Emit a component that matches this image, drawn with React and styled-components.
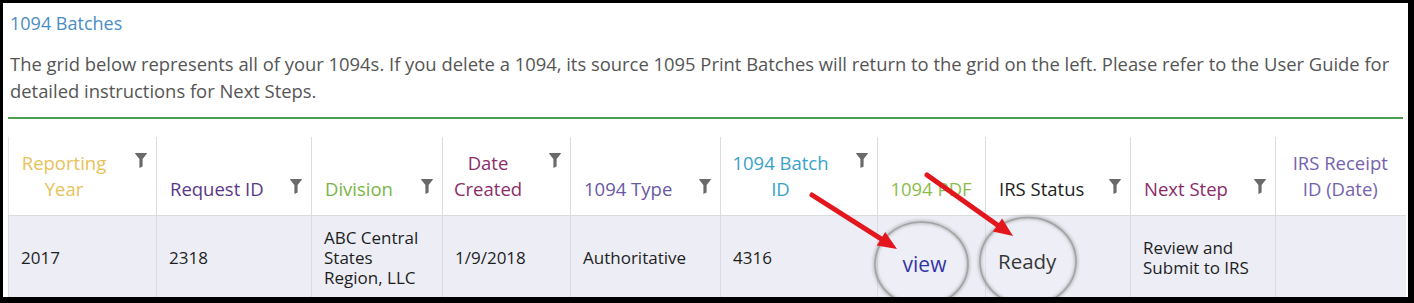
import React from 'react';
import styled, { createGlobalStyle } from 'styled-components';

const GlobalStyle = createGlobalStyle`
  html, body {
    margin: 0;
    padding: 0;
    background: #fff;
  }
  body {
    font-family: "Open Sans", "Liberation Sans", Arial, sans-serif;
  }
`;

// header labels: "\n" marks where the grid wraps the caption
const columns = [
  { key: 'year', label: 'Reporting\nYear', color: '#e8c15a', width: 148, center: true, filter: true },
  { key: 'request', label: 'Request ID', color: '#583988', width: 155, filter: true },
  { key: 'division', label: 'Division', color: '#7bb445', width: 131, filter: true },
  { key: 'date', label: 'Date\nCreated', color: '#8c2d69', width: 128, center: true, filter: true },
  { key: 'type', label: '1094 Type', color: '#6a58a3', width: 150, filter: true },
  { key: 'batch', label: '1094 Batch\nID', color: '#38a2cb', width: 157, center: true, filter: true },
  { key: 'pdf', label: '1094 PDF', color: '#8bbd4b', width: 108, center: true },
  { key: 'status', label: 'IRS Status', color: '#1e1e1e', width: 145, filter: true },
  { key: 'next', label: 'Next Step', color: '#8a2b69', width: 145, filter: true },
  { key: 'receipt', label: 'IRS Receipt\nID (Date)', color: '#7562ae', width: 130, center: true },
];

const row = {
  year: '2017',
  request: '2318',
  division: 'ABC Central States Region, LLC',
  date: '1/9/2018',
  type: 'Authoritative',
  batch: '4316',
  next: 'Review and Submit to IRS',
  receipt: '',
};

const FilterIcon = ({ pull }) => (
  <FilterSvg viewBox="0 0 12 15" width="12" height="15" $pull={pull}>
    <path d="M0 0.5 Q0 0 0.6 0 H11.4 Q12 0 12 0.5 L7.6 6 V13.6 L4.4 15 V6 Z" fill="#6a6a6a" />
  </FilterSvg>
);

const Arrow = ({ x1, y1, x2, y2 }) => {
  const angle = Math.atan2(y2 - y1, x2 - x1);
  const len = 19;
  const half = 8;
  const bx = x2 - len * Math.cos(angle);
  const by = y2 - len * Math.sin(angle);
  const px = -Math.sin(angle) * half;
  const py = Math.cos(angle) * half;
  return (
    <g>
      <line x1={x1} y1={y1} x2={bx + 2 * Math.cos(angle)} y2={by + 2 * Math.sin(angle)} stroke="#e2161c" strokeWidth="5" strokeLinecap="round" />
      <polygon points={`${x2},${y2} ${bx + px},${by + py} ${bx - px},${by - py}`} fill="#e2161c" />
    </g>
  );
};

const App = () => {
  return (
    <>
      <GlobalStyle />
      <Frame>
        <Title>1094 Batches</Title>
        <Intro>
          The grid below represents all of your 1094s. If you delete a 1094, its source 1095 Print Batches will return to the grid on the left. Please refer to the User Guide for detailed instructions for Next Steps.
        </Intro>
        <Rule />
        <Grid>
          <colgroup>
            {columns.map((c) => (
              <col key={c.key} style={{ width: c.width }} />
            ))}
          </colgroup>
          <thead>
            <tr>
              {columns.map((c) => (
                <HeadCell key={c.key} $color={c.color} $center={c.center} $filter={c.filter}>
                  {c.filter && <FilterIcon pull={c.center} />}
                  {c.label}
                </HeadCell>
              ))}
            </tr>
          </thead>
          <tbody>
            <tr>
              <Cell>{row.year}</Cell>
              <Cell>{row.request}</Cell>
              <Cell>{row.division}</Cell>
              <Cell>{row.date}</Cell>
              <Cell>{row.type}</Cell>
              <Cell>{row.batch}</Cell>
              <Cell $center>
                <ViewLink href="#">view</ViewLink>
              </Cell>
              <Cell>
                <Status>Ready</Status>
              </Cell>
              <Cell>{row.next}</Cell>
              <Cell>{row.receipt}</Cell>
            </tr>
          </tbody>
        </Grid>

        <Overlay viewBox="0 0 1414 303" width="1414" height="303">
          <defs>
            <filter id="ringShadow" x="-20%" y="-20%" width="140%" height="140%">
              <feGaussianBlur stdDeviation="1.6" />
            </filter>
          </defs>
          <ellipse cx="921.5" cy="264" rx="46.5" ry="42" fill="rgba(255,255,255,0.18)" stroke="#9a9a9a" strokeWidth="4" opacity="0.55" filter="url(#ringShadow)" />
          <ellipse cx="921.5" cy="264" rx="46.5" ry="42" fill="none" stroke="#a3a3a3" strokeWidth="1.6" />
          <ellipse cx="1028" cy="261.5" rx="48" ry="44" fill="rgba(255,255,255,0.18)" stroke="#9a9a9a" strokeWidth="4" opacity="0.55" filter="url(#ringShadow)" />
          <ellipse cx="1028" cy="261.5" rx="48" ry="44" fill="none" stroke="#a3a3a3" strokeWidth="1.6" />
          <Arrow x1={812} y1={195} x2={897} y2={249} />
          <Arrow x1={927} y1={175} x2={1013} y2={236} />
        </Overlay>
      </Frame>
    </>
  );
};

export default App;

const Frame = styled.div`
  position: relative;
  box-sizing: border-box;
  width: 1414px;
  height: 303px;
  overflow: hidden;
  background: #fff;
  border-style: solid;
  border-color: #000;
  border-width: 3px 6px 6px 3px;
  padding: 0 3px 0 5px;
`;

const Title = styled.div`
  padding: 8px 0 0 2px;
  height: 25px;
  font-size: 18px;
  line-height: 25px;
  color: #4a8cc4;
`;

const Intro = styled.p`
  margin: 14px 0 0 0;
  padding-left: 2px;
  font-size: 18.4px;
  line-height: 27px;
  color: #555;
`;

const Rule = styled.div`
  margin: 13px 2px 0 0;
  height: 2px;
  background: #4d9e4f;
`;

const Grid = styled.table`
  margin-top: 18px;
  width: 1397px;
  table-layout: fixed;
  border-collapse: collapse;
  font-size: 17px;
`;

const HeadCell = styled.th`
  height: 78px;
  box-sizing: border-box;
  padding-top: 0;
  padding-bottom: 13px;
  padding-left: ${({ $center }) => ($center ? '8px' : '13px')};
  padding-right: ${({ $center, $filter }) => ($center && $filter ? '45px' : '9px')};
  vertical-align: bottom;
  font-weight: normal;
  font-size: 18.5px;
  line-height: 26px;
  white-space: pre;
  text-align: ${({ $center }) => ($center ? 'center' : 'left')};
  color: ${({ $color }) => $color};
  border-left: 1px solid #dcdcdc;
  border-bottom: 1px solid #dcdcdc;
  &:first-child {
    border-left: 1px solid #e6e6e6;
  }
`;

const FilterSvg = styled.svg`
  float: right;
  display: block;
  margin-top: 3px;
  margin-right: ${({ $pull }) => ($pull ? '-36px' : '0')};
`;

const Cell = styled.td`
  height: 84px;
  box-sizing: border-box;
  padding: 12px 10px 12px 12px;
  vertical-align: middle;
  line-height: 20px;
  color: #1e1e1e;
  background: #ecedf5;
  text-align: ${({ $center }) => ($center ? 'center' : 'left')};
  border-left: 1px solid #dadbe3;
`;

const ViewLink = styled.a`
  display: inline-block;
  margin: 14px 16px 0 0;
  font-size: 21px;
  color: #1a1c9c;
  text-decoration: none;
`;

const Status = styled.span`
  display: inline-block;
  margin: 8px 0 0 0;
  font-size: 20.5px;
  color: #1e1e1e;
`;

const Overlay = styled.svg`
  position: absolute;
  left: -3px;
  top: -3px;
  pointer-events: none;
`;
